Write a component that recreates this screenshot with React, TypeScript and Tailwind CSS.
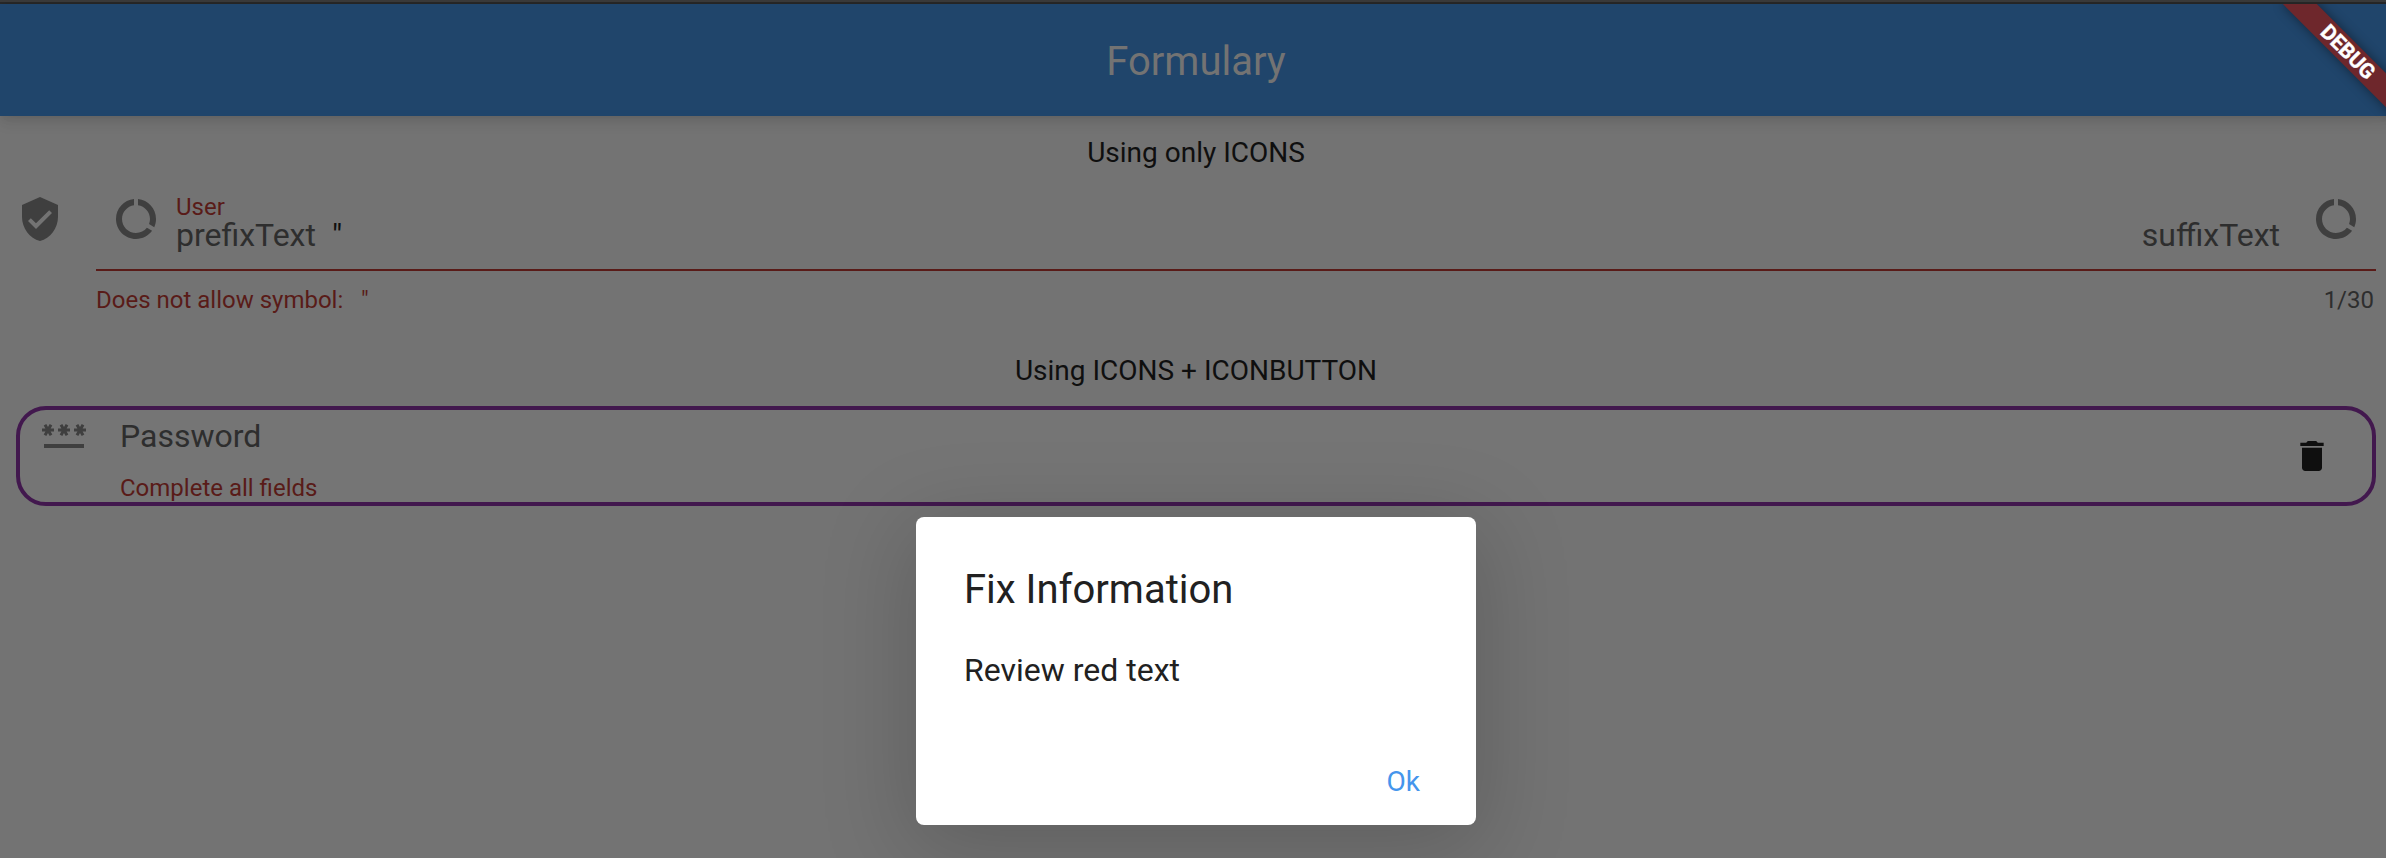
import React from "react";

type IconProps = { d: string; className: string };

const Icon = ({ d, className }: IconProps) => (
  <svg viewBox="0 0 24 24" fill="currentColor" className={className} aria-hidden="true">
    <path d={d} />
  </svg>
);

const SHIELD =
  "M12 1L3 5v6c0 5.55 3.84 10.74 9 12 5.16-1.26 9-6.45 9-12V5l-9-4zm-2 16l-4-4 1.41-1.41L10 14.17l6.59-6.59L18 9l-8 8z";
const USAGE =
  "M13 2.05v3.03c3.39.49 6 3.39 6 6.92 0 .9-.18 1.75-.48 2.54l2.6 1.53c.56-1.24.88-2.62.88-4.07 0-5.18-3.95-9.45-9-9.95zM12 19c-3.87 0-7-3.13-7-7 0-3.53 2.61-6.43 6-6.92V2.05c-5.06.5-9 4.76-9 9.95 0 5.52 4.47 10 9.99 10 3.31 0 6.24-1.61 8.06-4.09l-2.6-1.53C16.17 17.98 14.21 19 12 19z";
const PASSWORD =
  "M2 17h20v2H2v-2zm1.15-4.05L4 11.47l.85 1.48 1.3-.75-.85-1.48H7v-1.5H5.3l.85-1.47L4.85 7 4 8.47 3.15 7l-1.3.75.85 1.47H1v1.5h1.7l-.85 1.48 1.3.75zm6.7-.75l1.3.75.85-1.48.85 1.48 1.3-.75-.85-1.48H15v-1.5h-1.7l.85-1.47-1.3-.75L12 8.47 11.15 7l-1.3.75.85 1.47H9v1.5h1.7l-.85 1.48zM23 9.22h-1.7l.85-1.47-1.3-.75L20 8.47 19.15 7l-1.3.75.85 1.47H17v1.5h1.7l-.85 1.48 1.3.75.85-1.48.85 1.48 1.3-.75-.85-1.48H23v-1.5z";
const TRASH = "M6 19c0 1.1.9 2 2 2h8c1.1 0 2-.9 2-2V7H6v12zM19 4h-3.5l-1-1h-5l-1 1H5v2h14V4z";

const Banner = () => (
  <div className="absolute right-0 top-1 h-[140px] w-[140px] overflow-hidden">
    <div className="absolute left-[150px] top-0 h-0 w-0 rotate-45">
      <div className="absolute -left-20 top-14 flex h-6 w-40 items-center justify-center bg-[#6e272c] text-[21px] font-bold leading-6 text-white shadow-[0_0_12px_rgba(0,0,0,0.45)] [-webkit-text-stroke:0.4px_white]">
        DEBUG
      </div>
    </div>
  </div>
);

const UserField = () => (
  <div className="flex h-[161px] pl-4">
    <Icon d={SHIELD} className="mr-8 mt-6 size-12 shrink-0 text-[#3f3f3f]" />
    <div className="flex w-[2280px] flex-col">
      <div className="flex h-[100px] border-b-2 border-[#591b18] pl-4 pr-4 pt-6">
        <Icon d={USAGE} className="mr-4 size-12 shrink-0 text-[#3f3f3f]" />
        <div className="flex grow flex-col pt-0.5">
          <span className="text-2xl leading-[21px] text-[#591b18]">User</span>
          <div className="flex text-[32px] leading-[34px] text-[#2e2e2e]">
            <span>prefixText</span>
            <span className="ml-4 grow text-[#0f0f0f]">"</span>
            <span>suffixText</span>
          </div>
        </div>
        <Icon d={USAGE} className="ml-8 size-12 shrink-0 text-[#3f3f3f]" />
      </div>
      <div className="flex justify-between pt-[15px] text-2xl leading-7 text-[#591b18]">
        <span className="whitespace-pre">{'Does not allow symbol:   "'}</span>
        <span className="pr-0.5 text-[#2e2e2e]">1/30</span>
      </div>
    </div>
  </div>
);

const PasswordField = () => (
  <div className="ml-4 mt-[17px] flex h-[100px] w-[2360px] rounded-[30px] border-4 border-[#42184e] bg-[#757575] pl-5">
    <Icon d={PASSWORD} className="size-12 shrink-0 text-[#3f3f3f]" />
    <div className="flex grow flex-col pl-8 pt-[9px]">
      <span className="text-[32px] leading-[34px] text-[#2e2e2e]">Password</span>
      <span className="pt-[21px] text-2xl leading-7 text-[#591b18]">Complete all fields</span>
    </div>
    <Icon d={TRASH} className="mr-10 mt-[26px] size-10 shrink-0 text-[#0f0f0f]" />
  </div>
);

const Dialog = () => (
  <div className="absolute left-[916px] top-[517px] flex h-[308px] w-[560px] flex-col rounded-lg bg-white px-12 text-[#212121] shadow-[0_18px_88px_8px_rgba(0,0,0,0.17)]">
    <h2 className="pt-[49px] text-[40px] leading-12">Fix Information</h2>
    <p className="pt-[38px] text-[32px] leading-9">Review red text</p>
    <button className="mt-[76px] self-end pr-2 text-[28px] leading-9 text-[#4595ec]">Ok</button>
  </div>
);

export default function App() {
  return (
    <div className="relative h-[858px] w-[2386px] overflow-hidden bg-[#737373] font-[Roboto,sans-serif]">
      <div className="h-1 border-b-2 border-[#282828] bg-[#3a3a3a]" />
      <div className="w-[2392px]">
        <header className="flex h-28 items-center justify-center bg-[#20456b] pt-[3px] text-[40px] text-[#737373] shadow-[0_4px_8px_-2px_rgba(0,0,0,0.08),0_8px_14px_rgba(0,0,0,0.05),0_2px_20px_rgba(0,0,0,0.04)]">
          <h1 className="leading-12">Formulary</h1>
        </header>
        <h3 className="pt-[19px] text-center text-[28px] leading-9 text-[#0f0f0f]">Using only ICONS</h3>
        <UserField />
        <h3 className="pt-[21px] text-center text-[28px] leading-9 text-[#0f0f0f]">Using ICONS + ICONBUTTON</h3>
        <PasswordField />
      </div>
      <Banner />
      <Dialog />
    </div>
  );
}
